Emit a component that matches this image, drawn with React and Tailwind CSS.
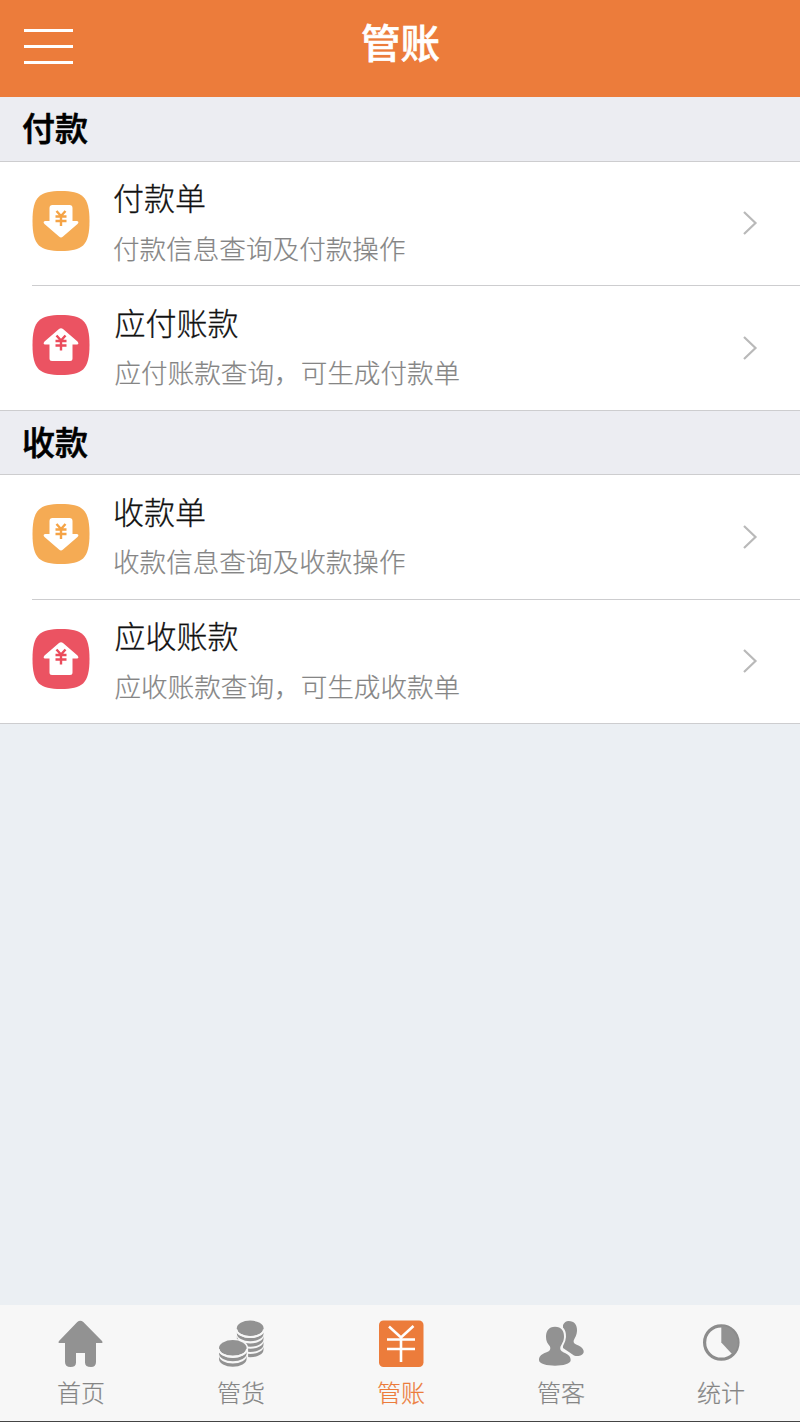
import React, { useState } from "react";

const sections = [
  {
    title: "付款",
    items: [
      { name: "付款单", desc: "付款信息查询及付款操作", type: "down" },
      { name: "应付账款", desc: "应付账款查询，可生成付款单", type: "up" },
    ],
  },
  {
    title: "收款",
    items: [
      { name: "收款单", desc: "收款信息查询及收款操作", type: "down" },
      { name: "应收账款", desc: "应收账款查询，可生成收款单", type: "up" },
    ],
  },
];

const DownIcon = () => (
  <svg width="58" height="60" viewBox="0 0 58 60" className="block">
    <path
      d="M29 0C50 0 57.500 5 57.500 30S50 60 29 60 0.500 55 0.500 30 8 0 29 0Z"
      fill="#f5ab54"
    />
    <path
      d="M20.500 14H37.500Q40.500 14 40.500 17V30H45Q47.500 30.500 45.500 33L31 45.500Q29 47.300 27 45.500L12.500 33Q10.500 30.500 13 30H17.500V17Q17.500 14 20.500 14Z"
      fill="#fff"
    />
    <path
      d="M24.500 20L29 25L33.500 20M23.500 25.500H34.500M23.500 30H34.500M29 25V35"
      fill="none"
      stroke="#f5a345"
      strokeWidth="2.400"
    />
  </svg>
);

const UpIcon = () => (
  <svg width="58" height="60" viewBox="0 0 58 60" className="block">
    <path
      d="M29 0C50 0 57.500 5 57.500 30S50 60 29 60 0.500 55 0.500 30 8 0 29 0Z"
      fill="#eb5362"
    />
    <path
      d="M27 14Q29 12.300 31 14L45.500 26.500Q47.500 29 45 29.500H40.500V43.500Q40.500 46 38 46H20Q17.500 46 17.500 43.500V29.500H13Q10.500 29 12.500 26.500Z"
      fill="#fff"
    />
    <path
      d="M24.500 20.500L29 25.500L33.500 20.500M23.500 26H34.500M23.500 30.500H34.500M29 25.500V35.500"
      fill="none"
      stroke="#eb4b5b"
      strokeWidth="2.400"
    />
  </svg>
);

const HomeIcon = () => (
  <svg width="48" height="50" viewBox="0 0 48 50">
    <path
      d="M20.300 3Q23.300 0.500 26.300 3L45 22Q46.500 24 44 24H39V43Q39 48 34 48Q28 48 28 43.500V34H19V43.500Q19 48 13.500 48Q8 48 8 43V24H3Q0.500 24 2 22Z"
      fill="#929292"
    />
  </svg>
);

const CoinsIcon = () => (
  <svg width="48" height="50" viewBox="0 0 48 50">
    <g fill="#929292">
      <ellipse cx="33.200" cy="9.300" rx="13.400" ry="7.700" />
      <path d="M19.900 14.700A13.300 7.600 0 0 0 46.500 14.700V11.500A13.300 7.600 0 0 1 19.900 11.500Z" />
      <path d="M19.900 20.100A13.300 7.600 0 0 0 46.500 20.100V16.900A13.300 7.600 0 0 1 19.900 16.900Z" />
      <path d="M19.900 25.400A13.300 7.600 0 0 0 46.500 25.400V22.200A13.300 7.600 0 0 1 19.900 22.200Z" />
      <path d="M19.900 30.700A13.300 7.600 0 0 0 46.500 30.700V27.500A13.300 7.600 0 0 1 19.900 27.500Z" />
    </g>
    {/* gaps between the coins */}
    <path d="M19.600 10.500A13.600 7.600 0 0 0 46.800 10.500" fill="none" stroke="#f7f7f7" strokeWidth="1.900" />
    <path
      d="M0.500 28.900A15.300 9.300 0 0 1 31.100 28.900V42H0.500Z"
      fill="#f7f7f7"
    />
    <g fill="#929292">
      <path d="M2 34.400A13.800 7.800 0 0 0 29.600 34.400V31.200A13.800 7.800 0 0 1 2 31.200Z" />
      <path d="M2 39.900A13.800 7.800 0 0 0 29.600 39.900V36.700A13.800 7.800 0 0 1 2 36.700Z" />
      <ellipse cx="15.800" cy="28.900" rx="13.800" ry="7.800" />
    </g>
    <path d="M1.700 30A14.100 7.800 0 0 0 29.900 30" fill="none" stroke="#f7f7f7" strokeWidth="1.900" />
  </svg>
);

const YuanIcon = () => (
  <svg width="48" height="50" viewBox="0 0 48 50">
    <rect x="2" y="1.500" width="44.500" height="46.500" rx="4.500" fill="#ec7c3b" />
    <path
      d="M12 7.500L24 18.500L36.500 7M10 20.500H38M10 30H38M24 18.500V43"
      fill="none"
      stroke="#fff"
      strokeWidth="2.600"
    />
  </svg>
);

const UsersIcon = () => (
  <svg width="48" height="50" viewBox="0 0 48 50">
    <path
      d="M31.500 2C37.500 2 40.300 6 40 12C39.800 16 38 18.500 36.700 21.500C36.200 24.500 38 25 41.500 26.500C45.500 28.300 47 31 46.700 33C46 36.500 41 38 37 36.500Q32 33 26 29V6Q28 2 31.500 2Z"
      fill="#929292"
    />
    <path
      d="M18 7.700C24.500 7.700 27.300 12 27 18C26.800 22.500 25 24.500 23.500 27.500C22.500 31 24.500 32.500 28 34C32 35.700 33.700 38 33.700 41C33.700 45 26 46.700 18 46.700S2 45 2 41C2 37 5 35 9 33.500C12.500 32.300 14 31 13 27.500C10.500 24.500 9 22 9 18C9 12 11.500 7.700 18 7.700Z"
      fill="#929292"
      stroke="#f7f7f7"
      strokeWidth="4"
      paintOrder="stroke"
    />
  </svg>
);

const ChartIcon = () => (
  <svg width="48" height="50" viewBox="0 0 48 50">
    <circle cx="24.300" cy="23.500" r="16.700" fill="none" stroke="#8c8c8c" strokeWidth="3.200" />
    <path d="M24.300 7V23.500L34.500 34.500L37 34A16.700 16.700 0 0 0 24.300 7Z" fill="#929292" />
  </svg>
);

const tabs = [
  { name: "首页", icon: <HomeIcon /> },
  { name: "管货", icon: <CoinsIcon /> },
  { name: "管账", icon: <YuanIcon /> },
  { name: "管客", icon: <UsersIcon /> },
  { name: "统计", icon: <ChartIcon /> },
];

function ListItem({ item, last }) {
  return (
    <div className="relative flex h-[124.5px] pl-8 cursor-pointer">
      <div className="pt-[29px]">
        {item.type === "down" ? <DownIcon /> : <UpIcon />}
      </div>
      <div
        className={
          item.type === "down"
            ? "flex-1 pl-[23px] pt-[13.500px]"
            : "flex-1 pl-[24.500px] pt-[13.500px]"
        }
      >
        <p className="text-[31px] leading-[44px] font-light [-webkit-text-stroke:0.3px] text-[#111]">
          {item.name}
        </p>
        <p className="mt-[9.500px] text-[26.600px] leading-[38px] font-light [-webkit-text-stroke:0.2px] text-[#858585]">
          {item.desc}
        </p>
      </div>
      <svg width="16" height="26" viewBox="0 0 16 26" className="mr-[42px] mt-[48.500px]">
        <path d="M2 2L13.500 13L2 24" fill="none" stroke="#b9b9b9" strokeWidth="2.200" />
      </svg>
      <div
        className={
          last
            ? "absolute bottom-0 left-0 right-0 h-px bg-[#cdcdcf]"
            : "absolute bottom-0 left-[32px] right-0 h-px bg-[#cdcdcf]"
        }
      />
    </div>
  );
}

function App() {
  const [active, setActive] = useState("管账");

  return (
    <div className="flex flex-col w-full h-[1422px] bg-[#ebeff3] font-['Noto_Sans_CJK_SC',sans-serif]">
      <header className="grid grid-cols-3 h-[97px] bg-[#ec7c3b]">
        <div className="flex flex-col gap-[13px] pl-6 pt-[29px]">
          <span className="w-[49px] h-[3px] bg-white" />
          <span className="w-[49px] h-[3px] bg-white" />
          <span className="w-[49px] h-[3px] bg-white" />
        </div>
        <h1 className="pt-[12px] pl-px text-center text-[39.500px] leading-[57px] font-medium [-webkit-text-stroke:0.6px] text-white">
          管账
        </h1>
      </header>

      <main className="flex-1">
        {sections.map((section) => (
          <section key={section.title}>
            <h2 className="h-[64.5px] pl-[22px] pt-[6px] text-[33px] leading-[48px] font-medium [-webkit-text-stroke:0.6px] text-black bg-[#ecedf2] border-b border-[#cdcdcf]">
              {section.title}
            </h2>
            <div className="bg-white">
              {section.items.map((item, i) => (
                <ListItem
                  key={item.name}
                  item={item}
                  last={i === section.items.length - 1}
                />
              ))}
            </div>
          </section>
        ))}
      </main>

      <nav className="grid grid-cols-5 h-[117px] bg-[#f7f7f7] border-b border-[#444]">
        {tabs.map((tab) => (
          <button
            key={tab.name}
            onClick={() => setActive(tab.name)}
            className="flex flex-col items-center pt-[14px] pl-[2px]"
          >
            {tab.icon}
            <span
              className={
                active === tab.name
                  ? "mt-[5px] text-2xl leading-[36px] font-light [-webkit-text-stroke:0.2px] text-[#ec7c3b]"
                  : "mt-[5px] text-2xl leading-[36px] font-light [-webkit-text-stroke:0.2px] text-[#858585]"
              }
            >
              {tab.name}
            </span>
          </button>
        ))}
      </nav>
    </div>
  );
}

export default App;
